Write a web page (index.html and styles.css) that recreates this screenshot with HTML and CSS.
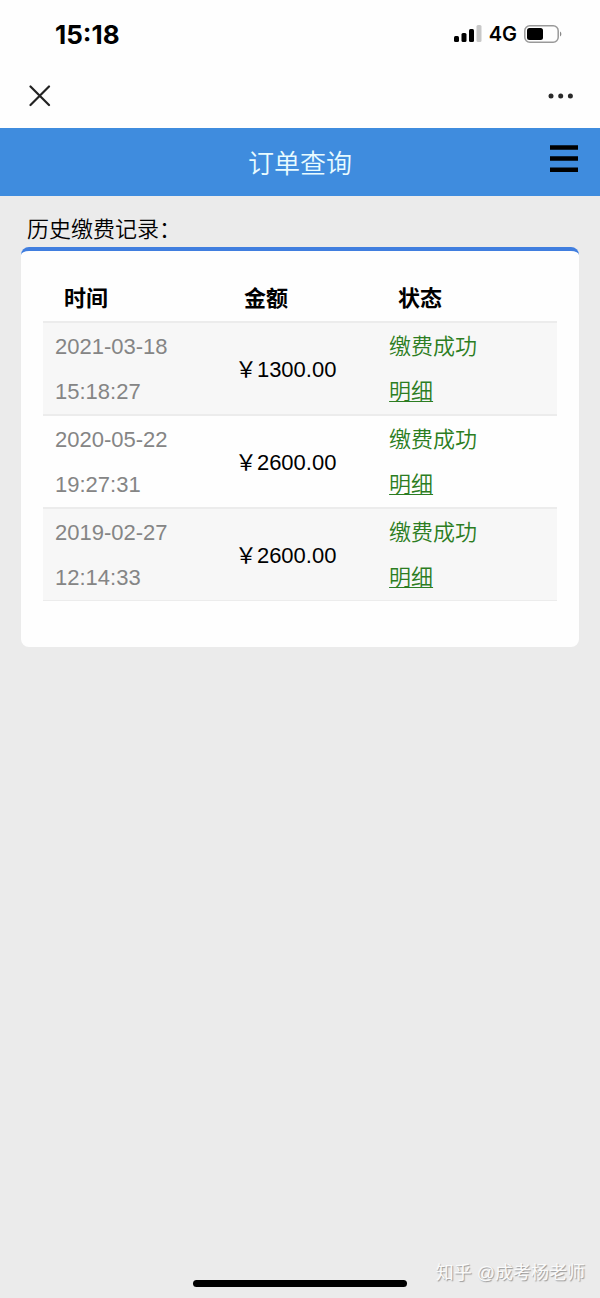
FILE: index.html
```html
<!DOCTYPE html>
<html lang="zh-CN">
<head>
<meta charset="utf-8">
<meta name="viewport" content="width=device-width, initial-scale=1">
<title>订单查询</title>
<link rel="stylesheet" href="styles.css">
</head>
<body>
<div class="status-bar">
  <time class="clock">15:18</time>
  <div class="indicators">
    <svg class="signal" viewBox="0 0 28 18" aria-hidden="true">
      <rect x="0" y="11" width="5" height="6" rx="1.5"/>
      <rect x="7.5" y="8" width="5" height="9" rx="1.5"/>
      <rect x="15" y="4" width="5" height="13" rx="1.5"/>
      <rect class="weak" x="22.5" y="0" width="5" height="17" rx="1.5"/>
    </svg>
    <span class="network">4G</span>
    <svg class="battery" viewBox="0 0 38 18" aria-hidden="true">
      <rect class="case" x="0.8" y="0.8" width="33.4" height="16.4" rx="5"/>
      <rect x="3" y="3" width="16" height="12" rx="2.5"/>
      <path class="cap" d="M36 6.5c1.8.8 1.8 4.2 0 5z"/>
    </svg>
  </div>
</div>
<nav class="browser-bar">
  <button class="icon-button" type="button" aria-label="关闭">
    <svg class="close" viewBox="0 0 22 22"><path d="M1.500 1.500l18.500 18.500M20 1.500l-18.500 18.500"/></svg>
  </button>
  <button class="icon-button" type="button" aria-label="更多">
    <svg class="more" viewBox="0 0 26 6"><circle cx="3" cy="3" r="2.500"/><circle cx="12.700" cy="3" r="2.500"/><circle cx="22.400" cy="3" r="2.500"/></svg>
  </button>
</nav>
<header class="page-header">
  <h1 class="title">订单查询</h1>
  <button class="icon-button" type="button" aria-label="菜单">
    <svg class="menu" viewBox="0 0 28 28"><path d="M0 2.500h28M0 13.500h28M0 24.700h28"/></svg>
  </button>
</header>
<main class="content">
  <h2 class="section-label">历史缴费记录：</h2>
  <section class="card">
    <table class="records">
      <thead>
        <tr><th class="col-time" scope="col">时间</th><th class="col-amount" scope="col">金额</th><th class="col-status" scope="col">状态</th></tr>
      </thead>
      <tbody>
        <tr><td class="time">2021-03-18<br>15:18:27</td><td>￥1300.00</td><td class="status">缴费成功<br><a class="detail" href="#">明细</a></td></tr>
        <tr><td class="time">2020-05-22<br>19:27:31</td><td>￥2600.00</td><td class="status">缴费成功<br><a class="detail" href="#">明细</a></td></tr>
        <tr><td class="time">2019-02-27<br>12:14:33</td><td>￥2600.00</td><td class="status">缴费成功<br><a class="detail" href="#">明细</a></td></tr>
      </tbody>
    </table>
  </section>
</main>
<footer class="bottom">
  <div class="home-indicator"></div>
  <p class="watermark">知乎 @成考杨老师</p>
</footer>
</body>
</html>
```
FILE: styles.css
```css
* {
  box-sizing: border-box;
}

body {
  display: flex;
  flex-direction: column;
  min-height: 100vh;
  margin: 0;
  background: #ebebeb;
  color: #000;
  font-family: "Liberation Sans", "Noto Sans CJK SC", sans-serif;
  font-size: 22px;
}

svg {
  display: block;
}

.status-bar {
  display: flex;
  align-items: center;
  justify-content: space-between;
  height: 68px;
  padding: 0 38px 0 55px;
  background: #fefefe;
}

.clock {
  font-family: Inter, sans-serif;
  font-size: 26px;
  font-weight: 700;
}

.indicators {
  display: flex;
  align-items: center;
  gap: 7px;
}

.network {
  font-family: Inter, sans-serif;
  font-size: 20px;
  font-weight: 600;
}

.signal {
  width: 28px;
  height: 18px;
}

.weak {
  fill: #c8c8c8;
}

.battery {
  width: 38px;
  height: 18px;
}

.case {
  fill: none;
  stroke: #999;
  stroke-width: 1.5;
}

.cap {
  fill: #888;
}

.browser-bar {
  display: flex;
  align-items: center;
  justify-content: space-between;
  height: 60px;
  padding: 0 26px 4px 29px;
  background: #fefefe;
}

.icon-button {
  padding: 0;
  border: 0;
  background: none;
  cursor: pointer;
}

.close {
  width: 22px;
  height: 22px;
  fill: none;
  stroke: #222;
  stroke-width: 2.2;
  stroke-linecap: round;
}

.more {
  width: 26px;
  height: 6px;
  fill: #2a2a2a;
}

.page-header {
  display: grid;
  grid-template-columns: 1fr auto 1fr;
  align-items: center;
  height: 68px;
  padding: 0 22px 2px;
  background: #3f8cde;
}

.title {
  grid-column: 2;
  margin: 0;
  color: #e8fbff;
  font-size: 26px;
  font-weight: 350;
}

.page-header .icon-button {
  justify-self: end;
  padding-bottom: 4px;
}

.menu {
  width: 28px;
  height: 28px;
  stroke: #000;
  stroke-width: 4.6;
}

.content {
  flex: 1;
  padding: 17px 21px 0;
}

.section-label {
  margin: 0;
  padding-left: 6px;
  font-size: 22px;
  font-weight: 350;
  line-height: 34px;
}

.card {
  padding: 24px 22px 46px;
  border-top: 4px solid #407edf;
  border-radius: 8px;
  background: #fefefe;
}

.records {
  width: 100%;
  border-collapse: separate;
  border-spacing: 0;
  table-layout: fixed;
  line-height: 45px;
  text-align: left;
}

.records th {
  padding: 1px 0 0 21px;
  font-weight: 600;
}

.col-time,
.col-status {
  width: 35%;
}

.col-amount {
  width: 30%;
}

.records td {
  padding: 1px 0 0 12px;
  border-top: 2px solid #ececec;
}

.records tr:last-child td {
  border-bottom: 1px solid #ececec;
}

.records tbody tr:nth-child(odd) {
  background: #f7f7f7;
}

.records .time {
  color: #858585;
}

.records .status {
  color: #2c7d22;
  font-weight: 350;
}

.detail {
  color: inherit;
  text-decoration: underline;
  text-decoration-thickness: 1px;
  text-underline-offset: 2px;
}

.bottom {
  display: grid;
  grid-template-columns: 1fr 214px 1fr;
  align-items: end;
  padding: 0 15px 11px;
}

.home-indicator {
  grid-column: 2;
  height: 7px;
  border-radius: 4px;
  background: #000;
}

.watermark {
  justify-self: end;
  margin: 0;
  color: #fafafa;
  font-size: 18px;
  line-height: 28px;
  text-shadow: 1px 1px 1px #999;
  white-space: nowrap;
}
```
